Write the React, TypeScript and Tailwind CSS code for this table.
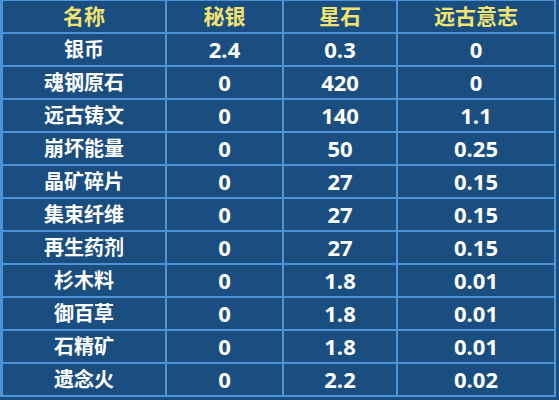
const HEAD = ["名称", "秘银", "星石", "远古意志"];

const ROWS: string[][] = [
  ["银币", "2.4", "0.3", "0"],
  ["魂钢原石", "0", "420", "0"],
  ["远古铸文", "0", "140", "1.1"],
  ["崩坏能量", "0", "50", "0.25"],
  ["晶矿碎片", "0", "27", "0.15"],
  ["集束纤维", "0", "27", "0.15"],
  ["再生药剂", "0", "27", "0.15"],
  ["杉木料", "0", "1.8", "0.01"],
  ["御百草", "0", "1.8", "0.01"],
  ["石精矿", "0", "1.8", "0.01"],
  ["遗念火", "0", "2.2", "0.02"],
];

export default function App() {
  return (
    <div
      className="h-[400px] w-[559px] bg-[#1b4e80]"
      style={{ fontFamily: '"Open Sans", "Noto Sans CJK SC", sans-serif' }}
    >
      <div className="grid w-[556px] grid-cols-[162px_115px_112px_156px] gap-[2px] bg-[#4e93d6] pt-[1px] pb-[2px] pl-[3px] pr-[2px]">
        {HEAD.map((h) => (
          <div
            key={h}
            className="flex h-[31px] items-center justify-center bg-[#1b4e80] text-[21px] font-bold text-[#f2e46c]"
          >
            {h}
          </div>
        ))}
        {ROWS.map((row) =>
          row.map((cell, i) => (
            <div
              key={row[0] + i}
              className={`flex h-[31px] items-center justify-center bg-[#1b4e80] font-bold text-white ${
                i === 0 ? "text-[20px]" : "text-[22px]"
              }`}
            >
              {cell}
            </div>
          )),
        )}
      </div>
    </div>
  );
}
